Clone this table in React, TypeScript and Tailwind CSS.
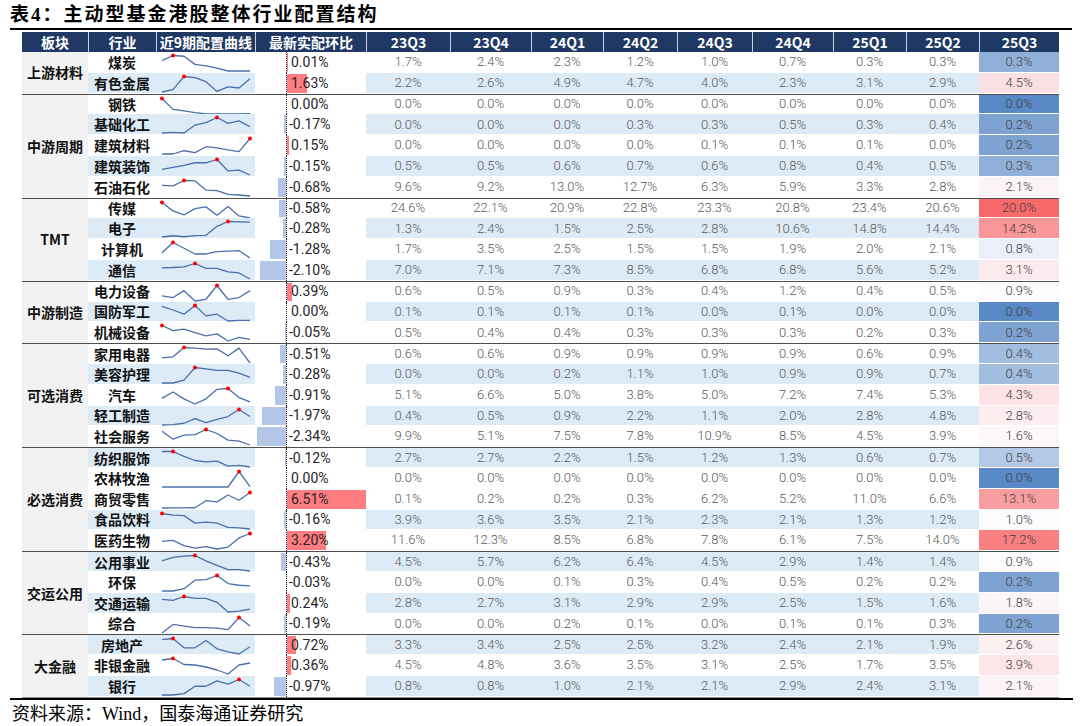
import React from "react";

type Row = {
  name: string;
  v: number[];
  chg: number;
  blue: boolean;
  spark?: number[];
  dot?: number;
};
type Group = { name: string; rows: Row[] };

const groups: Group[] = [
  {
    name: "上游材料",
    rows: [
      { name: "煤炭", v: [1.7, 2.4, 2.3, 1.2, 1.0, 0.7, 0.3, 0.3, 0.3], chg: 0.01, blue: false },
      { name: "有色金属", v: [2.2, 2.6, 4.9, 4.7, 4.0, 2.3, 3.1, 2.9, 4.5], chg: 1.63, blue: true },
    ],
  },
  {
    name: "中游周期",
    rows: [
      { name: "钢铁", v: [0, 0, 0, 0, 0, 0, 0, 0, 0], chg: 0.0, blue: false, spark: [1, 0.3, 0.2, 0.09, 0, 0, 0, 0, 0.02], dot: 0 },
      { name: "基础化工", v: [0, 0, 0, 0.3, 0.3, 0.5, 0.3, 0.4, 0.2], chg: -0.17, blue: true, spark: [0, 0.04, 0, 0.51, 0.67, 1, 0.62, 0.78, 0.4], dot: 5 },
      { name: "建筑材料", v: [0, 0, 0, 0, 0.1, 0.1, 0.1, 0.0, 0.2], chg: 0.15, blue: false, spark: [0, 0, 0.21, 0.09, 0.47, 0.4, 0.26, 0.15, 1], dot: 8 },
      { name: "建筑装饰", v: [0.5, 0.5, 0.6, 0.7, 0.6, 0.8, 0.4, 0.5, 0.3], chg: -0.15, blue: true, spark: [0.36, 0.49, 0.62, 0.79, 0.79, 1, 0.26, 0.32, 0], dot: 5 },
      { name: "石油石化", v: [9.6, 9.2, 13.0, 12.7, 6.3, 5.9, 3.3, 2.8, 2.1], chg: -0.68, blue: false },
    ],
  },
  {
    name: "TMT",
    rows: [
      { name: "传媒", v: [24.6, 22.1, 20.9, 22.8, 23.3, 20.8, 23.4, 20.6, 20.0], chg: -0.58, blue: false },
      { name: "电子", v: [1.3, 2.4, 1.5, 2.5, 2.8, 10.6, 14.8, 14.4, 14.2], chg: -0.28, blue: true },
      { name: "计算机", v: [1.7, 3.5, 2.5, 1.5, 1.5, 1.9, 2.0, 2.1, 0.8], chg: -1.28, blue: false },
      { name: "通信", v: [7.0, 7.1, 7.3, 8.5, 6.8, 6.8, 5.6, 5.2, 3.1], chg: -2.1, blue: true },
    ],
  },
  {
    name: "中游制造",
    rows: [
      { name: "电力设备", v: [0.6, 0.5, 0.9, 0.3, 0.4, 1.2, 0.4, 0.5, 0.9], chg: 0.39, blue: false },
      { name: "国防军工", v: [0.1, 0.1, 0.1, 0.1, 0.0, 0.1, 0.0, 0.0, 0.0], chg: 0.0, blue: true, spark: [0.95, 0.71, 0.44, 1, 0.33, 0.44, 0, 0.04, 0.04], dot: 3 },
      { name: "机械设备", v: [0.5, 0.4, 0.4, 0.3, 0.3, 0.3, 0.2, 0.3, 0.2], chg: -0.05, blue: false, spark: [1, 0.67, 0.76, 0.54, 0.33, 0.46, 0, 0.24, 0.11], dot: 0 },
    ],
  },
  {
    name: "可选消费",
    rows: [
      { name: "家用电器", v: [0.6, 0.6, 0.9, 0.9, 0.9, 0.9, 0.6, 0.9, 0.4], chg: -0.51, blue: false, spark: [0.33, 0.4, 1, 0.96, 0.89, 0.91, 0.47, 0.96, 0], dot: 2 },
      { name: "美容护理", v: [0.0, 0.0, 0.2, 1.1, 1.0, 0.9, 0.9, 0.7, 0.4], chg: -0.28, blue: true },
      { name: "汽车", v: [5.1, 6.6, 5.0, 3.8, 5.0, 7.2, 7.4, 5.3, 4.3], chg: -0.91, blue: false },
      { name: "轻工制造", v: [0.4, 0.5, 0.9, 2.2, 1.1, 2.0, 2.8, 4.8, 2.8], chg: -1.97, blue: true },
      { name: "社会服务", v: [9.9, 5.1, 7.5, 7.8, 10.9, 8.5, 4.5, 3.9, 1.6], chg: -2.34, blue: false },
    ],
  },
  {
    name: "必选消费",
    rows: [
      { name: "纺织服饰", v: [2.7, 2.7, 2.2, 1.5, 1.2, 1.3, 0.6, 0.7, 0.5], chg: -0.12, blue: true, spark: [1, 1, 0.69, 0.42, 0.33, 0.375, 0.06, 0.1, 0], dot: 1 },
      { name: "农林牧渔", v: [0, 0, 0, 0, 0, 0, 0, 0, 0], chg: 0.0, blue: false, spark: [0, 0, 0, 0, 0, 0, 0, 1, 0.02], dot: 7 },
      { name: "商贸零售", v: [0.1, 0.2, 0.2, 0.3, 6.2, 5.2, 11.0, 6.6, 13.1], chg: 6.51, blue: false },
      { name: "食品饮料", v: [3.9, 3.6, 3.5, 2.1, 2.3, 2.1, 1.3, 1.2, 1.0], chg: -0.16, blue: true },
      { name: "医药生物", v: [11.6, 12.3, 8.5, 6.8, 7.8, 6.1, 7.5, 14.0, 17.2], chg: 3.2, blue: false },
    ],
  },
  {
    name: "交运公用",
    rows: [
      { name: "公用事业", v: [4.5, 5.7, 6.2, 6.4, 4.5, 2.9, 1.4, 1.4, 0.9], chg: -0.43, blue: true },
      { name: "环保", v: [0.0, 0.0, 0.1, 0.3, 0.4, 0.5, 0.2, 0.2, 0.2], chg: -0.03, blue: false, spark: [0, 0, 0.15, 0.7, 0.74, 1, 0.48, 0.37, 0.33], dot: 5 },
      { name: "交通运输", v: [2.8, 2.7, 3.1, 2.9, 2.9, 2.5, 1.5, 1.6, 1.8], chg: 0.24, blue: true },
      { name: "综合", v: [0.0, 0.0, 0.2, 0.1, 0.0, 0.1, 0.1, 0.3, 0.2], chg: -0.19, blue: false, spark: [0, 0.55, 0.45, 0.35, 0.35, 0.31, 0.22, 1, 0.45], dot: 7 },
    ],
  },
  {
    name: "大金融",
    rows: [
      { name: "房地产", v: [3.3, 3.4, 2.5, 2.5, 3.2, 2.4, 2.1, 1.9, 2.6], chg: 0.72, blue: true },
      { name: "非银金融", v: [4.5, 4.8, 3.6, 3.5, 3.1, 2.5, 1.7, 3.5, 3.9], chg: 0.36, blue: false },
      { name: "银行", v: [0.8, 0.8, 1.0, 2.1, 2.1, 2.9, 2.4, 3.1, 2.1], chg: -0.97, blue: true },
    ],
  },
];

const HEAD = ["23Q3", "23Q4", "24Q1", "24Q2", "24Q3", "24Q4", "25Q1", "25Q2"];
const DATA_W = [84, 81, 72, 74, 75, 81, 73, 73];

const last = groups.flatMap((g) => g.rows.map((r) => r.v[8]));
const sorted = [...last].sort((a, b) => a - b);
const HMIN = sorted[0];
const HMAX = sorted[sorted.length - 1];
const HMID = sorted[Math.floor(sorted.length / 2)];

const C_MIN = [0x5a, 0x8a, 0xc6];
const C_MID = [0xfc, 0xfc, 0xff];
const C_MAX = [0xf8, 0x69, 0x6b];

function mix(a: number[], b: number[], t: number) {
  const c = a.map((x, i) => Math.round(x + (b[i] - x) * t));
  return `rgb(${c[0]},${c[1]},${c[2]})`;
}

function heat(v: number) {
  if (v <= HMID) return mix(C_MIN, C_MID, HMID === HMIN ? 1 : (v - HMIN) / (HMID - HMIN));
  return mix(C_MID, C_MAX, (v - HMID) / (HMAX - HMID));
}

function Spark({ row }: { row: Row }) {
  const vals = row.spark ?? row.v;
  const mn = Math.min(...vals);
  const mx = Math.max(...vals);
  const norm = vals.map((x) => (mx === mn ? 0.5 : (x - mn) / (mx - mn)));
  const dot = row.dot ?? vals.indexOf(mx);
  const pts = norm.map((n, i) => [6 + i * 11, 3.5 + (1 - n) * 15.5]);
  return (
    <svg width="99" height="20" className="block overflow-visible">
      <polyline
        points={pts.map((p) => `${p[0]},${p[1]}`).join(" ")}
        fill="none"
        stroke="#4a6fae"
        strokeWidth="1.3"
        strokeLinejoin="round"
      />
      <circle cx={pts[dot][0]} cy={pts[dot][1]} r="2" fill="#ff0000" />
    </svg>
  );
}

function BarCell({ chg }: { chg: number }) {
  const w = Math.abs(chg) * 12.2;
  return (
    <div className="relative w-[111px] h-full shrink-0">
      {chg < 0 && (
        <div className="absolute right-[80px] top-[1px] bottom-[1px] bg-[#b4c6e7]" style={{ width: w }} />
      )}
      {chg > 0 && (
        <div className="absolute left-[32px] top-[1px] bottom-[1px] bg-[#ff7c80]" style={{ width: w }} />
      )}
      <div className="absolute left-[31px] top-0 bottom-0 border-l border-dotted border-[#1a1a1a]" />
      <div
        className={
          chg < 0
            ? "relative h-full flex items-center pl-[34px] font-['Roboto',sans-serif] text-[14px] text-[#262626]"
            : "relative h-full flex items-center pl-[36px] font-['Roboto',sans-serif] text-[14px] text-[#262626]"
        }
      >
        {chg.toFixed(2)}%
      </div>
    </div>
  );
}

function DataRow({ row, first }: { row: Row; first: boolean }) {
  const bg = row.blue ? "bg-[#ddebf7]" : "bg-white";
  return (
    <div
      className={
        first
          ? "flex h-[20.8px] border-t border-[#4d4d4d]"
          : "flex h-[20.8px]"
      }
    >
      <div className={`${bg} w-[167px] shrink-0 flex border-b border-white`}>
        <div className="w-[68px] shrink-0 flex items-center justify-center text-[14px] font-bold text-[#111] leading-none">
          {row.name}
        </div>
        <div className="w-[99px] shrink-0 h-full">
          <Spark row={row} />
        </div>
      </div>
      <BarCell chg={row.chg} />
      <div className={`${bg} flex shrink-0 border-b border-white`}>
        {DATA_W.map((w, i) => (
          <div
            key={i}
            className="flex items-center justify-center font-['Roboto',sans-serif] font-light text-[13px] text-[#595959]"
            style={{ width: w }}
          >
            {row.v[i].toFixed(1)}%
          </div>
        ))}
      </div>
      <div
        className="w-[80px] shrink-0 flex items-center justify-center border-b border-white font-['Roboto',sans-serif] font-light text-[13px] text-[#404040]"
        style={{ backgroundColor: heat(row.v[8]) }}
      >
        {row.v[8].toFixed(1)}%
      </div>
    </div>
  );
}

export default function App() {
  return (
    <div className="w-[1080px] h-[726px] bg-white overflow-hidden font-['Noto_Sans_CJK_SC','Noto_Sans',sans-serif] text-black">
      <div className="h-[28px] pl-[10px] pt-[3px] text-[19px] leading-[23px] font-bold tracking-[2px] font-['Liberation_Serif','Noto_Sans_CJK_SC',serif]">
        表4：主动型基金港股整体行业配置结构
      </div>
      <div className="ml-[10px] w-[1062px] h-[2px] bg-black" />
      <div className="ml-[22px] w-[1037px] mt-[2px]">
        <div className="flex h-[20px] bg-[#203864] text-white text-[14px] font-bold leading-[20px]">
          <div className="w-[66px] text-center">板块</div>
          <div className="w-[68px] text-center border-l border-[#c9d1e0]">行业</div>
          <div className="w-[99px] text-center border-l border-[#c9d1e0] whitespace-nowrap">近9期配置曲线</div>
          <div className="w-[111px] text-center border-l border-[#c9d1e0]">最新实配环比</div>
          {HEAD.map((h, i) => (
            <div key={h} className="text-center border-l border-[#c9d1e0]" style={{ width: DATA_W[i] }}>
              {h}
            </div>
          ))}
          <div className="w-[80px] text-center border-l border-[#c9d1e0]">25Q3</div>
        </div>
        <div className="border-b border-[#8c8c8c]">
          {groups.map((g, gi) => (
            <div key={g.name} className="flex">
              <div
                className={
                  gi === 0
                    ? "w-[66px] shrink-0 bg-[#f2f2f2] flex items-center justify-center text-[14px] font-bold text-[#111]"
                    : "w-[66px] shrink-0 bg-[#f2f2f2] flex items-center justify-center text-[14px] font-bold text-[#111] border-t border-[#4d4d4d]"
                }
              >
                {g.name}
              </div>
              <div className="flex flex-col">
                {g.rows.map((r, ri) => (
                  <DataRow key={r.name} row={r} first={gi !== 0 && ri === 0} />
                ))}
              </div>
            </div>
          ))}
        </div>
      </div>
      <div className="ml-[10px] w-[1063px] h-[2px] bg-black" />
      <div className="pl-[12px] pt-[2px] text-[18px] leading-[24px] font-['Liberation_Serif','Noto_Sans_CJK_SC',serif]">
        资料来源：Wind，国泰海通证券研究
      </div>
    </div>
  );
}
